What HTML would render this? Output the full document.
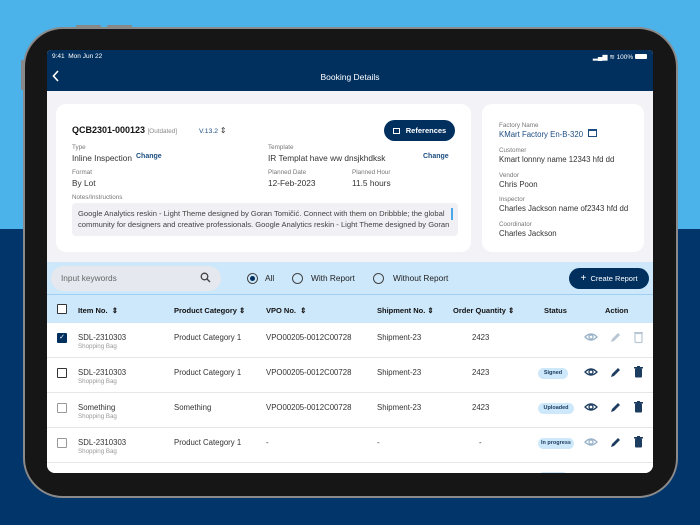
<!DOCTYPE html>
<html><head><meta charset="utf-8"><style>
*{margin:0;padding:0;box-sizing:border-box}
body{width:700px;height:525px;overflow:hidden;position:relative;font-family:"Liberation Sans",sans-serif;background:#02356a}
.top{position:absolute;left:0;top:0;width:700px;height:229px;background:#4bb3ea}
.frame{position:absolute;left:23px;top:27px;width:655px;height:471px;border-radius:40px;background:#161616;border:2px solid #8a8a8a}
.btn{position:absolute;background:#888;border-radius:2px}
.screen{position:absolute;left:47px;top:50px;width:606px;height:423px;background:#f2f2f7;overflow:hidden;border-radius:4px 4px 8px 8px}
.nav{position:absolute;left:0;top:0;width:606px;height:41px;background:#01305f;color:#fff}
.a{position:absolute;white-space:nowrap}
.card{position:absolute;background:#fff;border-radius:10px}
.lbl{font-size:6.3px;color:#777}
.val{font-size:8.3px;color:#333}
.lnk{font-size:7px;color:#1d4d80;font-weight:bold}
.th{font-size:7.5px;color:#111;font-weight:bold}
.td{font-size:7.8px;color:#333}
.sub{font-size:6.2px;color:#999}
.cb{position:absolute;width:10px;height:10px;border:1.5px solid #333;border-radius:1px;background:#fff}
.pill{position:absolute;height:11px;border-radius:6px;background:#cde8fb;font-size:5.5px;font-weight:bold;color:#1d3d60;text-align:center;line-height:11px}
.row{position:absolute;left:0;width:606px;height:35px;background:#fff;border-bottom:1px solid #e6e6e6}
.rad{position:absolute;width:11px;height:11px;border:1.3px solid #444;border-radius:50%}
</style></head><body>
<div class="top"></div>
<div class="frame"></div>
<div class="btn" style="left:76px;top:25px;width:25px;height:3px"></div>
<div class="btn" style="left:107px;top:25px;width:25px;height:3px"></div>
<div class="btn" style="left:21px;top:60px;width:3px;height:30px"></div>
<div class="screen">
 <div class="nav">
  <div class="a" style="left:5px;top:3px;font-size:6.5px">9:41&nbsp; Mon Jun 22</div>
  <div class="a" style="right:6px;top:3px;font-size:6.5px">▂▄▆ ≋ 100% <span style="display:inline-block;width:12px;height:5px;background:#fff;border-radius:1px"></span></div>
  <svg class="a" style="left:5px;top:20px" width="8" height="12"><path d="M6 1L1.5 6L6 11" stroke="#fff" stroke-width="1.6" fill="none"/></svg>
  <div class="a" style="left:0;width:606px;text-align:center;top:22px;font-size:8.5px">Booking Details</div>
 </div>
 <div class="card" style="left:9px;top:54px;width:415px;height:148px">
  <div class="a" style="left:16px;top:21px;font-size:9px;font-weight:bold;color:#111">QCB2301-000123 <span style="font-size:6.3px;color:#888;font-weight:normal">[Outdated]</span></div>
  <div class="a" style="left:143px;top:22px;font-size:6.8px;color:#1d4d80">V.13.2 <span style="color:#333;font-size:8px">⇕</span></div>
  <div class="a" style="left:328px;top:16px;width:71px;height:21px;border-radius:11px;background:#01305f;color:#fff;font-size:7.5px;font-weight:bold;line-height:21px;text-align:center"><span style="display:inline-block;width:7px;height:6px;border:1.2px solid #fff;margin-right:6px;vertical-align:-1px"></span>References</div>
  <div class="a lbl" style="left:16px;top:40px">Type</div>
  <div class="a val" style="left:16px;top:49px">Inline Inspection</div>
  <div class="a lnk" style="left:80px;top:49px">Change</div>
  <div class="a lbl" style="left:212px;top:40px">Template</div>
  <div class="a val" style="left:212px;top:49px">IR Templat have ww dnsjkhdksk</div>
  <div class="a lnk" style="left:367px;top:49px">Change</div>
  <div class="a lbl" style="left:16px;top:65px">Format</div>
  <div class="a val" style="left:16px;top:74px">By Lot</div>
  <div class="a lbl" style="left:212px;top:65px">Planned Date</div>
  <div class="a val" style="left:212px;top:74px">12-Feb-2023</div>
  <div class="a lbl" style="left:296px;top:65px">Planned Hour</div>
  <div class="a val" style="left:296px;top:74px">11.5 hours</div>
  <div class="a lbl" style="left:16px;top:90px">Notes/Instructions</div>
  <div class="a" style="left:16px;top:99px;width:386px;height:33px;background:#f0f0f5;border-radius:4px;padding:5px 6px;font-size:7.6px;color:#444;line-height:11px;white-space:normal">Google Analytics reskin - Light Theme designed by Goran Tomičić. Connect with them on Dribbble; the global community for designers and creative professionals. Google Analytics reskin - Light Theme designed by Goran</div>
  <div class="a" style="left:395px;top:104px;width:2px;height:12px;background:#4aa8e8"></div>
 </div>
 <div class="card" style="left:435px;top:54px;width:162px;height:148px">
  <div class="a lbl" style="left:17px;top:18px">Factory Name</div>
  <div class="a" style="left:17px;top:26px;font-size:7.8px;color:#1d4d80">KMart Factory En-B-320</div>
  <div class="a" style="left:106px;top:25px;width:9px;height:8px;border:1.3px solid #1d4d80;border-top-width:2.5px"></div>
  <div class="a lbl" style="left:17px;top:43px">Customer</div>
  <div class="a val" style="left:17px;top:51px;font-size:7.8px">Kmart lonnny name 12343 hfd dd</div>
  <div class="a lbl" style="left:17px;top:68px">Vendor</div>
  <div class="a val" style="left:17px;top:76px;font-size:7.8px">Chris Poon</div>
  <div class="a lbl" style="left:17px;top:92px">Inspector</div>
  <div class="a val" style="left:17px;top:100px;font-size:7.8px">Charles Jackson name of2343 hfd dd</div>
  <div class="a lbl" style="left:17px;top:117px">Coordinator</div>
  <div class="a val" style="left:17px;top:125px;font-size:7.8px">Charles Jackson</div>
 </div>
 <div class="a" style="left:0;top:212px;width:606px;height:33px;background:#cde8fb;border-bottom:1px solid #9fd0f3"></div>
 <div class="a" style="left:4px;top:216px;width:170px;height:25px;border-radius:13px;background:#e5e8ef"></div>
 <div class="a" style="left:14px;top:223px;font-size:8.3px;color:#666">Input keywords</div>
 <svg class="a" style="left:153px;top:222px" width="11" height="11"><circle cx="4.5" cy="4.5" r="3.3" stroke="#444" stroke-width="1.3" fill="none"/><path d="M7 7L10 10" stroke="#444" stroke-width="1.4"/></svg>
 <div class="rad" style="left:200px;top:223px"></div><div class="a" style="left:203px;top:226px;width:5px;height:5px;border-radius:50%;background:#01305f"></div>
 <div class="a" style="left:218px;top:223px;font-size:8.3px;color:#222">All</div>
 <div class="rad" style="left:245px;top:223px"></div>
 <div class="a" style="left:264px;top:223px;font-size:8.3px;color:#222">With Report</div>
 <div class="rad" style="left:326px;top:223px"></div>
 <div class="a" style="left:346px;top:223px;font-size:8.3px;color:#222">Without Report</div>
 <div class="a" style="left:522px;top:218px;width:80px;height:21px;border-radius:11px;background:#01305f;color:#fff;font-size:7.5px;line-height:21px;text-align:center"><span style="font-size:10px">+</span>&nbsp; Create Report</div>
 <div class="a" style="left:0;top:245px;width:606px;height:28px;background:#cde8fb"></div>
 <div class="cb" style="left:10px;top:254px"></div>
 <div class="a th" style="left:31px;top:256px">Item No. &nbsp;⇕</div>
 <div class="a th" style="left:127px;top:256px">Product Category ⇕</div>
 <div class="a th" style="left:219px;top:256px">VPO No. &nbsp;⇕</div>
 <div class="a th" style="left:330px;top:256px">Shipment No. ⇕</div>
 <div class="a th" style="left:406px;top:256px">Order Quantity ⇕</div>
 <div class="a th" style="left:497px;top:256px">Status</div>
 <div class="a th" style="left:558px;top:256px">Action</div>

 <div class="row" style="top:273px"></div>
 <div class="row" style="top:308px"></div>
 <div class="row" style="top:343px"></div>
 <div class="row" style="top:378px"></div>
 <div class="row" style="top:413px"></div>

 <div class="cb" style="left:10px;top:283px;background:#01305f;border-color:#01305f;color:#fff;font-size:7px;line-height:7px;text-align:center">✓</div>
 <div class="cb" style="left:10px;top:318px"></div>
 <div class="cb" style="left:10px;top:353px;border-color:#999"></div>
 <div class="cb" style="left:10px;top:388px;border-color:#999"></div>

 <div class="a td" style="left:31px;top:283px">SDL-2310303</div><div class="a sub" style="left:31px;top:293px">Shopping Bag</div>
 <div class="a td" style="left:127px;top:283px">Product Category 1</div>
 <div class="a td" style="left:219px;top:283px">VPO00205-0012C00728</div>
 <div class="a td" style="left:330px;top:283px">Shipment-23</div>
 <div class="a td" style="left:425px;top:283px">2423</div>

 <div class="a td" style="left:31px;top:318px">SDL-2310303</div><div class="a sub" style="left:31px;top:328px">Shopping Bag</div>
 <div class="a td" style="left:127px;top:318px">Product Category 1</div>
 <div class="a td" style="left:219px;top:318px">VPO00205-0012C00728</div>
 <div class="a td" style="left:330px;top:318px">Shipment-23</div>
 <div class="a td" style="left:425px;top:318px">2423</div>
 <div class="pill" style="left:491px;top:318px;width:30px">Signed</div>

 <div class="a td" style="left:31px;top:353px">Something</div><div class="a sub" style="left:31px;top:363px">Shopping Bag</div>
 <div class="a td" style="left:127px;top:353px">Something</div>
 <div class="a td" style="left:219px;top:353px">VPO00205-0012C00728</div>
 <div class="a td" style="left:330px;top:353px">Shipment-23</div>
 <div class="a td" style="left:425px;top:353px">2423</div>
 <div class="pill" style="left:491px;top:353px;width:36px">Uploaded</div>

 <div class="a td" style="left:31px;top:388px">SDL-2310303</div><div class="a sub" style="left:31px;top:398px">Shopping Bag</div>
 <div class="a td" style="left:127px;top:388px">Product Category 1</div>
 <div class="a td" style="left:219px;top:388px">-</div>
 <div class="a td" style="left:330px;top:388px">-</div>
 <div class="a td" style="left:432px;top:388px">-</div>
 <div class="pill" style="left:491px;top:388px;width:36px">In progress</div>
 <div class="pill" style="left:491px;top:422px;width:30px"></div>

 <svg class="a" style="left:536px;top:281px" width="75" height="150">
  <defs>
   <g id="eye"><path d="M0 5Q6 -1 12 5Q6 11 0 5Z" fill="none" stroke-width="1.3"/><circle cx="6" cy="5" r="2" fill="none" stroke-width="1.3"/></g>
   <g id="pen"><path d="M1 10L2 7L8 1L10 3L4 9Z"/></g>
   <g id="bin"><rect x="1" y="2.5" width="7" height="9" rx="1"/><rect x="0" y="1" width="9" height="1.5"/><rect x="3" y="0" width="3" height="1.5"/></g>
  </defs>
  <use href="#eye" x="2" y="1" stroke="#9ab3c9"/>
  <use href="#pen" x="27" y="1" fill="#b8c6d4"/>
  <g transform="translate(51 0)"><rect x="1" y="2.5" width="7" height="9" rx="1" fill="none" stroke="#b8c6d4" stroke-width="1.2"/><rect x="0" y="1" width="9" height="1.3" fill="#b8c6d4"/></g>
  <use href="#eye" x="2" y="36" stroke="#1d3d60"/>
  <use href="#pen" x="27" y="36" fill="#1d3d60"/>
  <use href="#bin" x="51" y="35" fill="#1d3d60"/>
  <use href="#eye" x="2" y="71" stroke="#1d3d60"/>
  <use href="#pen" x="27" y="71" fill="#1d3d60"/>
  <use href="#bin" x="51" y="70" fill="#1d3d60"/>
  <use href="#eye" x="2" y="106" stroke="#9ab3c9"/>
  <use href="#pen" x="27" y="106" fill="#1d3d60"/>
  <use href="#bin" x="51" y="105" fill="#1d3d60"/>
 </svg>
</div>
</body></html>
